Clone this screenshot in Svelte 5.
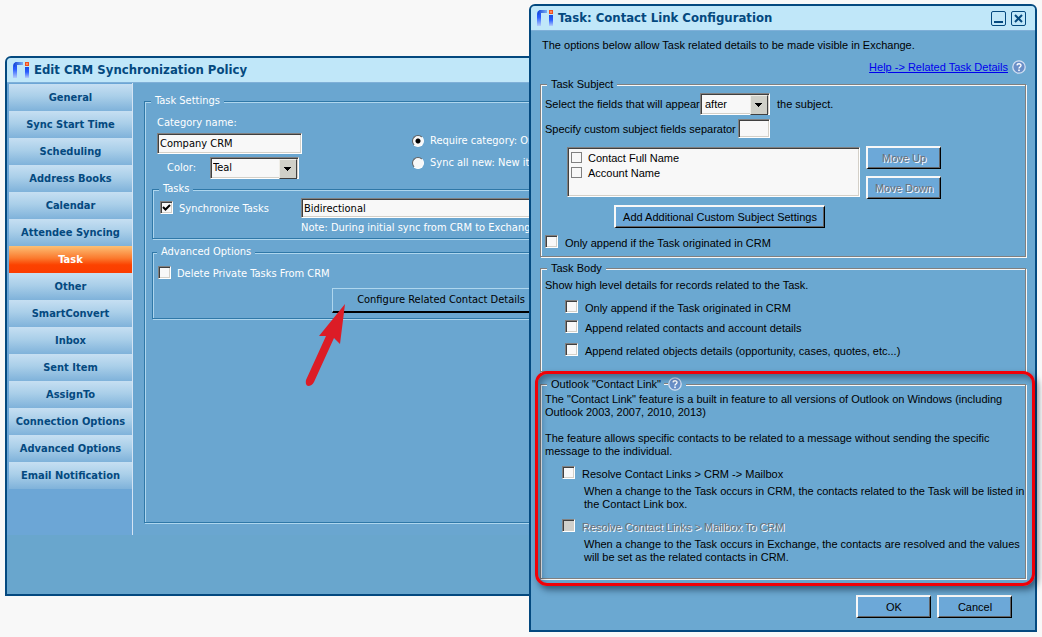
<script>
  const tabs = [
    'General', 'Sync Start Time', 'Scheduling', 'Address Books', 'Calendar',
    'Attendee Syncing', 'Task', 'Other', 'SmartConvert', 'Inbox', 'Sent Item',
    'AssignTo', 'Connection Options', 'Advanced Options', 'Email Notification'
  ];
  let active = $state('Task');
  let requireCategory = $state('require');

  const bodyOptions = [
    'Only append if the Task originated in CRM',
    'Append related contacts and account details',
    'Append related objects details (opportunity, cases, quotes, etc...)'
  ];
  const subjectFields = ['Contact Full Name', 'Account Name'];
</script>

{#snippet logo()}
  <svg class="logo" viewBox="0 0 17 16" width="17" height="16" aria-hidden="true">
    <defs>
      <linearGradient id="stem" x1="0" y1="0" x2="0" y2="1">
        <stop offset="0" stop-color="#1a4fe0" />
        <stop offset="0.45" stop-color="#2a5cff" />
        <stop offset="1" stop-color="#b4cdfb" />
      </linearGradient>
      <linearGradient id="arm" x1="0" y1="0" x2="1" y2="0">
        <stop offset="0" stop-color="#1646d8" />
        <stop offset="1" stop-color="#78aef4" />
      </linearGradient>
    </defs>
    <path d="M0 16V4Q0 1 3 0H4V16Z" fill="url(#stem)" />
    <path d="M1 2Q2 0 4 0H10V3H4L1 5Z" fill="url(#arm)" />
    <rect x="12" y="5" width="4" height="11" fill="url(#stem)" />
    <rect x="12" y="0" width="4" height="4" fill="#f0501e" />
    <rect x="13" y="1" width="2" height="2" fill="#ff8a5c" />
  </svg>
{/snippet}

{#snippet help()}
  <svg class="help" viewBox="0 0 14 14" width="14" height="14" aria-hidden="true">
    <circle cx="7" cy="7" r="6.2" fill="#6a8fc8" stroke="#d3e0f2" stroke-width="1.3" />
    <path d="M5 5.4C5.1 3.2 9.1 3.2 9 5.5C8.9 7 7 7 7 8.4" fill="none" stroke="#fff" stroke-width="1.4" />
    <rect x="6.2" y="9.5" width="1.6" height="1.6" fill="#fff" />
  </svg>
{/snippet}

<div class="desktop">
  <section class="window policy">
    <header>
      {@render logo()}
      <h1>Edit CRM Synchronization Policy</h1>
    </header>
    <div class="body">
      <nav>
        {#each tabs as tab}
          <button class="tab" class:active={active === tab} onclick={() => (active = tab)}>{tab}</button>
        {/each}
      </nav>
      <main>
        <fieldset class="settings">
          <legend>Task Settings</legend>
          <div class="category">
            <div class="names">
              <label for="cat">Category name:</label>
              <input id="cat" class="sunken" type="text" value="Company CRM" />
              <div class="color">
                <label for="color">Color:</label>
                <span class="select">
                  <select id="color" class="sunken"><option>Teal</option></select>
                </span>
              </div>
            </div>
            <div class="radios">
              <label><input type="radio" value="require" bind:group={requireCategory} />Require category: Only</label>
              <label><input type="radio" value="all" bind:group={requireCategory} />Sync all new: New items</label>
            </div>
          </div>
          <fieldset class="tasks">
            <legend>Tasks</legend>
            <label class="check"><input type="checkbox" checked />Synchronize Tasks</label>
            <div class="direction">
              <input class="sunken" type="text" value="Bidirectional" aria-label="Direction" />
              <p>Note: During initial sync from CRM to Exchange,</p>
            </div>
          </fieldset>
          <fieldset class="advanced">
            <legend>Advanced Options</legend>
            <label class="check"><input type="checkbox" />Delete Private Tasks From CRM</label>
            <div class="configure">
              <button class="flat">Configure Related Contact Details</button>
              <svg class="arrow" viewBox="0 0 42 84" width="42" height="84" aria-hidden="true">
                <path d="M41 1L36 41L30 35L10 79Q8 83 4 83Q1 82 2 77L22 33L15 33Z" fill="#dc1c26" />
              </svg>
            </div>
          </fieldset>
        </fieldset>
      </main>
    </div>
    <footer></footer>
  </section>

  <section class="window link">
    <header>
      {@render logo()}
      <h1>Task: Contact Link Configuration</h1>
      <div class="controls">
        <button aria-label="Minimize">
          <svg viewBox="0 0 15 15" width="15" height="15"><rect x="0.5" y="0.5" width="14" height="14" rx="1.5" /><path d="M3 11H12" /></svg>
        </button>
        <button aria-label="Close">
          <svg viewBox="0 0 15 15" width="15" height="15"><rect x="0.5" y="0.5" width="14" height="14" rx="1.5" /><path d="M4 4L11 11M11 4L4 11" /></svg>
        </button>
      </div>
    </header>
    <div class="content">
      <p class="intro">The options below allow Task related details to be made visible in Exchange.</p>
      <div class="helpline"><a href="#help">Help -&gt; Related Task Details</a>{@render help()}</div>

      <fieldset class="subject">
        <legend>Task Subject</legend>
        <div class="row first">
          <label for="pos">Select the fields that will appear</label>
          <span class="select"><select id="pos" class="sunken"><option>after</option></select></span>
          <span>the subject.</span>
        </div>
        <div class="row second">
          <label for="sep">Specify custom subject fields separator</label>
          <input id="sep" class="sunken" type="text" />
        </div>
        <div class="picker">
          <div class="list sunken">
            {#each subjectFields as field}
              <label><input type="checkbox" />{field}</label>
            {/each}
          </div>
          <div class="moves">
            <button class="raised" disabled>Move Up</button>
            <button class="raised" disabled>Move Down</button>
          </div>
        </div>
        <button class="raised add">Add Additional Custom Subject Settings</button>
        <label class="check"><input type="checkbox" />Only append if the Task originated in CRM</label>
      </fieldset>

      <fieldset class="taskbody">
        <legend>Task Body</legend>
        <p>Show high level details for records related to the Task.</p>
        <div class="options">
          {#each bodyOptions as option}
            <label class="check"><input type="checkbox" />{option}</label>
          {/each}
        </div>
      </fieldset>

      <div class="marked">
        <fieldset class="outlook">
          <legend>Outlook "Contact Link"<span class="dash"></span>{@render help()}</legend>
          <p>The "Contact Link" feature is a built in feature to all versions of Outlook on Windows (including Outlook 2003, 2007, 2010, 2013)</p>
          <p>The feature allows specific contacts to be related to a message without sending the specific message to the individual.</p>
          <div class="resolve">
            <label class="check"><input type="checkbox" />Resolve Contact Links &gt; CRM -&gt; Mailbox</label>
            <p>When a change to the Task occurs in CRM, the contacts related to the Task will be listed in the Contact Link box.</p>
          </div>
          <div class="resolve">
            <label class="check off"><input type="checkbox" disabled />Resolve Contact Links &gt; Mailbox To CRM</label>
            <p>When a change to the Task occurs in Exchange, the contacts are resolved and the values will be set as the related contacts in CRM.</p>
          </div>
        </fieldset>
        <div class="callout"></div>
      </div>

      <div class="actions">
        <button class="raised">OK</button>
        <button class="raised">Cancel</button>
      </div>
    </div>
  </section>
</div>

<style>
  :global(body) { background: #f8f8f8; }
  .desktop {
    position: relative;
    min-height: 100vh;
    overflow: hidden;
    font: 11px/14px "Liberation Sans", Arial, sans-serif;
    color: #000;
    --navy: #04497f;
    --panel: #6aa6d0;
  }
  * { box-sizing: border-box; }
  p, h1, fieldset, legend { margin: 0; padding: 0; }
  button, input, select { font: inherit; color: inherit; margin: 0; }
  fieldset { min-width: 0; border: 1px solid var(--dark); box-shadow: 1px 1px 0 var(--light), inset 1px 1px 0 var(--light); }
  legend { margin-left: 2px; padding: 0 4px; height: 14px; background: var(--panel); }

  .window {
    position: absolute;
    border: 2px solid var(--navy);
    border-radius: 6px 6px 0 0;
    background: var(--panel);
  }
  .policy { left: 5px; top: 56px; width: 60%; --dark: #2f78a8; --light: #aed6ee; font-family: "DejaVu Sans Condensed", Tahoma, sans-serif; color: #fff; }
  .link { left: 529px; right: 5px; top: 4px; --dark: #808080; --light: #f8f8f8; --panel: #6ba8d1; }

  header {
    display: flex;
    align-items: center;
    height: 25px;
    padding: 0 9px 0 6px;
    gap: 4px;
    background: #c0e7f9;
    border-bottom: 1px solid #7fb0d8;
    border-radius: 4px 4px 0 0;
    color: var(--navy);
  }
  h1 { flex: 1; font: bold 13px/16px "DejaVu Sans Condensed", Tahoma, sans-serif; white-space: nowrap; }
  .logo { flex: none; }
  .controls { display: flex; gap: 5px; }
  .controls button { display: flex; padding: 0; border: 0; background: none; }
  .controls rect { fill: none; stroke: var(--navy); }
  .controls path { fill: none; stroke: var(--navy); stroke-width: 2; }

  .body { display: flex; }
  nav { width: 126px; padding: 1px 0 46px 2px; border-right: 1px solid #d4e4f4; background: #6ca6d6; flex: none; }
  .tab {
    display: block;
    width: 100%;
    height: 27px;
    padding: 0;
    border: 0;
    background: linear-gradient(#c6dff2, #aacfe9 45%, #7fb2da);
    color: var(--navy);
    font: bold 11px/14px "DejaVu Sans Condensed", Tahoma, sans-serif;
    text-align: center;
  }
  .tab.active { background: linear-gradient(#fcc076, #fb7a2e 45%, #fc4200 70%, #fb3c00); color: #fff; }
  main { flex: 1; padding: 11px 11px 12px; min-width: 0; display: flex; }
  footer { height: 59px; background: #69a6cd; }

  .settings { flex: 1; padding: 8px 7px 7px; }
  .settings > legend { margin-left: -1px; }
  .category { display: grid; grid-template-columns: 255px 1fr; padding-left: 5px; }
  .names { display: flex; flex-direction: column; align-items: flex-start; gap: 3px; }
  #cat { width: 145px; height: 21px; }
  .color { display: flex; align-items: center; padding-left: 10px; gap: 14px; }
  .color .select { width: 89px; }
  .radios { display: flex; flex-direction: column; gap: 8px; padding-top: 18px; white-space: nowrap; }
  .radios label { display: flex; align-items: center; gap: 6px; }

  .tasks { display: flex; margin-top: 3px; padding: 2px 8px 3px 7px; }
  .tasks legend, .advanced legend { margin-left: -1px; }
  .tasks .check { align-self: flex-start; width: 141px; padding-top: 3px; }
  .direction { flex: 1; display: flex; flex-direction: column; gap: 3px; white-space: nowrap; }
  .direction .sunken { width: 100%; height: 20px; }
  .advanced { margin-top: 6px; padding: 7px 5px 5px; }
  .configure { position: relative; width: 218px; margin: 6px 0 0 174px; }
  .flat {
    width: 100%;
    height: 25px;
    padding: 0;
    border: 1px solid #aed6ee;
    border-bottom: 2px solid #000;
    background: var(--panel);
    color: #000;
  }
  .arrow { position: absolute; left: -28px; top: 15px; pointer-events: none; }

  .sunken {
    border: 1px solid #808080;
    border-right-color: #fff;
    border-bottom-color: #fff;
    border-radius: 0;
    background: #f8f8f8;
    box-shadow: inset 1px 1px 0 #404040, inset -1px -1px 0 #d4d0c8;
    color: #000;
    padding: 0 2px;
    outline: 0;
  }
  .select { position: relative; display: block; }
  .select select { display: block; width: 100%; height: 22px; appearance: none; }
  .first .select select { padding-left: 4px; }
  .select::after {
    content: "";
    position: absolute;
    right: 2px;
    top: 2px;
    width: 16px;
    height: 18px;
    border: 1px solid #f0eee8;
    border-right-color: #404040;
    border-bottom-color: #404040;
    background: linear-gradient(#000, #000) 4px 7px / 7px 1px no-repeat, linear-gradient(#000, #000) 5px 8px / 5px 1px no-repeat, linear-gradient(#000, #000) 6px 9px / 3px 1px no-repeat, linear-gradient(#000, #000) 7px 10px / 1px 1px no-repeat, #d0d0c8;
    pointer-events: none;
  }
  .check { display: flex; align-items: flex-start; gap: 6px; line-height: 16px; }
  .link .check { gap: 7px; }
  .check input {
    appearance: none;
    flex: none;
    width: 13px;
    height: 13px;
    border: 1px solid #808080;
    border-right-color: #fff;
    border-bottom-color: #fff;
    background: #f8f8f8;
    box-shadow: inset 1px 1px 0 #404040, inset -1px -1px 0 #d4d0c8;
  }
  .check input:checked {
    background: #f8f8f8 url("data:image/svg+xml,%3Csvg xmlns='http://www.w3.org/2000/svg' viewBox='0 0 11 11'%3E%3Cpath d='M2 5L4.5 7.5L9 3' fill='none' stroke='black' stroke-width='2'/%3E%3C/svg%3E") center / 11px 11px no-repeat;
  }
  input[type="radio"] {
    appearance: none;
    width: 12px;
    height: 12px;
    border-radius: 50%;
    border: 1px solid #606060;
    border-right-color: #fff;
    border-bottom-color: #fff;
    background: #f8f8f8;
  }
  input[type="radio"]:checked { background: radial-gradient(circle, #000 2px, #f8f8f8 3px); }

  .content { padding: 7px 9px 12px; }
  .intro { padding-left: 2px; }
  .helpline { display: flex; justify-content: flex-end; align-items: center; gap: 4px; padding-top: 8px; }
  .helpline a { color: #0000ee; }
  .help { flex: none; }

  .subject { margin-top: 3px; padding: 2px 4px 5px; }
  .row { display: flex; align-items: center; }
  .first { gap: 7px; }
  .first label { width: 148px; white-space: nowrap; }
  .first .select { width: 70px; }
  .second { padding-top: 4px; }
  .second label { width: 193px; white-space: nowrap; }
  .second input { width: 32px; height: 19px; }
  .picker { display: flex; gap: 6px; padding: 7px 80px 0 22px; }
  .list { flex: 1; height: 50px; margin-top: 2px; padding: 2px 3px; }
  .list label { display: flex; align-items: center; gap: 6px; height: 15px; }
  .list input { appearance: none; width: 11px; height: 11px; border: 1px solid #808080; background: #f8f8f8; }
  .moves { display: flex; flex-direction: column; gap: 7px; padding-top: 1px; }
  .raised {
    width: 75px;
    height: 23px;
    padding: 0;
    border: 2px solid #f8f8f8;
    border-right: 1px solid #000;
    border-bottom: 1px solid #000;
    background: #6ca8d8;
    box-shadow: inset -1px -1px 0 #606468;
  }
  .raised:disabled, .off { color: #6c7078; text-shadow: 1px 1px 0 #fff; }
  .add { display: block; width: 211px; margin: 6px 0 7px 69px; }

  .taskbody { margin-top: 4px; padding: 3px 4px 12px; }
  .options { display: flex; flex-direction: column; gap: 4px; padding: 8px 0 0 20px; }
  .options .check:last-child { margin-top: 3px; }

  .marked { position: relative; margin-top: 5px; }
  .outlook { padding: 2px 0 14px 4px; line-height: 13px; }
  .outlook > p { padding-right: 8px; }
  .outlook > p + p { padding-top: 13px; }
  .outlook legend { display: flex; align-items: center; }
  .dash { width: 4px; height: 2px; margin: 0 0 0 3px; border-top: 1px solid var(--dark); background: var(--light); }
  .resolve { margin-right: -2px; padding: 8px 0 0 17px; }
  .resolve p { padding: 3px 0 0 22px; }
  .off input { background: #d0d0cc; }
  .callout {
    position: absolute;
    inset: -6px -9px -7px -5px;
    border: 3px solid #f00008;
    border-radius: 12px;
    box-shadow: 3px 4px 6px rgba(0, 20, 40, 0.5), inset 3px 4px 6px rgba(0, 20, 40, 0.4);
    pointer-events: none;
  }
  .actions { display: flex; justify-content: flex-end; gap: 6px; padding: 16px 14px 0 0; }
</style>
